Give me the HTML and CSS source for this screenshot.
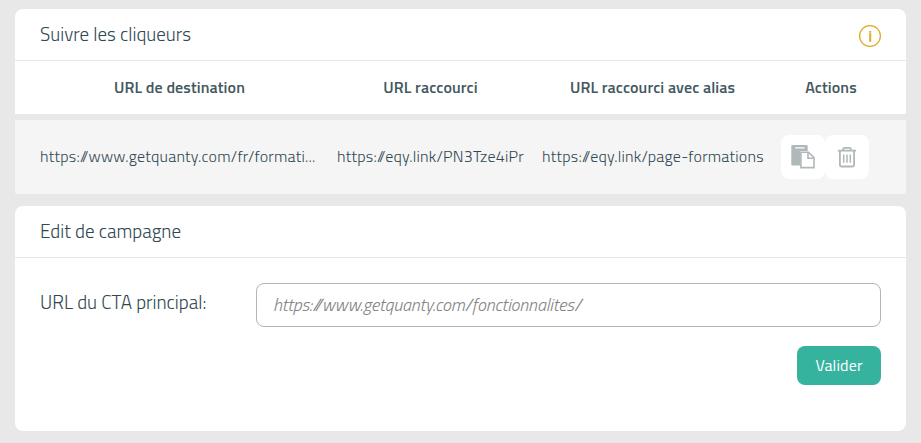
FILE: index.html
```html
<!DOCTYPE html>
<html lang="fr">
<head>
  <meta charset="UTF-8">
  <meta name="viewport" content="width=device-width, initial-scale=1.0">
  <title>Suivre les cliqueurs</title>
  <link rel="stylesheet" href="styles.css">
</head>
<body>
  <div class="card links-card">
    <div class="card-header">
      <h2>Suivre les cliqueurs</h2>
      <svg class="info-icon" viewBox="0 0 24 24">
        <circle cx="12" cy="12" r="10.4" fill="none" stroke="#e0ac25" stroke-width="1.3"/>
        <rect x="11.2" y="7" width="2" height="1.7" fill="#e0ac25"/>
        <rect x="11.2" y="9.2" width="2" height="8.6" fill="#e0ac25"/>
      </svg>
    </div>
    <div class="table-row table-head">
      <div>URL de destination</div>
      <div>URL raccourci</div>
      <div>URL raccourci avec alias</div>
      <div>Actions</div>
    </div>
  </div>

  <div class="table-row table-body">
    <div>https://www.getquanty.com/fr/formati...</div>
    <div>https://eqy.link/PN3Tze4iPr</div>
    <div>https://eqy.link/page-formations</div>
    <div class="actions">
      <button class="icon-btn" type="button" aria-label="Copier">
        <svg width="24" height="24" viewBox="0 0 24 24">
          <path fill="#b0b8ba" fill-rule="evenodd" d="M1.5 0h14a1.2 1.2 0 0 1 1.2 1.2V6H9.200v14.400H1.500a1.200 1.200 0 0 1-1.200-1.200V1.200A1.200 1.200 0 0 1 1.500 0zM4.300 2.200v1.300h9.200V2.200z"/>
          <path fill="#fff" stroke="#b0b8ba" stroke-width="1.600" d="M9.900 7.200h7.600l5.500 5.500v9.900H9.900z"/>
          <path fill="none" stroke="#b0b8ba" stroke-width="1.600" d="M17 7.500v5.700h5.800"/>
        </svg>
      </button>
      <button class="icon-btn" type="button" aria-label="Supprimer">
        <svg width="20" height="22" viewBox="0 0 20 22" fill="none" stroke="#b0b8ba" stroke-width="1.800">
          <path d="M1 4.600h18M6.200 4.500V3a1.200 1.200 0 0 1 1.200-1.200h5.200A1.200 1.200 0 0 1 13.800 3v1.500M2.900 4.600v14.100a1.800 1.800 0 0 0 1.800 1.800h10.600a1.800 1.800 0 0 0 1.800-1.800V4.600"/>
          <path stroke-width="1.500" d="M6.700 8.400v8.400M10 8.400v8.400M13.300 8.400v8.400"/>
        </svg>
      </button>
    </div>
  </div>

  <div class="card edit-card">
    <div class="card-header">
      <h2>Edit de campagne</h2>
    </div>
    <form class="edit-form">
      <div class="form-row">
        <label for="cta-url">URL du CTA principal:</label>
        <input id="cta-url" type="text" placeholder="https://www.getquanty.com/fonctionnalites/">
      </div>
      <button class="submit-btn" type="button">Valider</button>
    </form>
  </div>
</body>
</html>
```

FILE: styles.css
```css
* {
  box-sizing: border-box;
}

body {
  margin: 0;
  padding: 9px 15px 12px;
  font-family: "Titillium Web", Roboto, sans-serif;
  background-color: #e8e8e8;
  color: #2f4852;
}

.card {
  background-color: #fff;
  border-radius: 8px;
}

.links-card {
  height: 105px;
  margin-bottom: 6px;
  border-radius: 8px 8px 0 0;
}

.card-header {
  display: flex;
  justify-content: space-between;
  align-items: center;
  height: 52px;
  padding: 0 25px;
  border-bottom: 1px solid #e8e8e8;
}

.card-header h2 {
  margin: 0;
  padding-bottom: 2px;
  font-size: 19px;
  font-weight: 300;
}

.info-icon {
  width: 24px;
  height: 24px;
  margin: 3px -1px 0 0;
}

/* Links table */
.table-row {
  display: grid;
  grid-template-columns: 279px 187px 221px 100px;
  column-gap: 18px;
  align-items: center;
  padding: 0 25px 2px;
  font-size: 16px;
  white-space: nowrap;
}

.table-head {
  height: 53px;
  color: #435860;
  font-weight: 600;
  letter-spacing: 0.1px;
  text-align: center;
}

.table-body {
  height: 74px;
  margin-bottom: 12px;
  background-color: #f5f5f5;
  border-radius: 0 0 2px 2px;
  font-weight: 300;
  letter-spacing: 0.21px;
}

.actions {
  display: flex;
  padding-top: 2px;
}

.icon-btn {
  display: flex;
  justify-content: center;
  align-items: center;
  width: 44px;
  height: 44px;
  padding: 0;
  border: none;
  border-radius: 8px;
  background-color: #fff;
  cursor: pointer;
}

/* Campaign form */
.edit-card {
  height: 225px;
}

.edit-form {
  display: flex;
  flex-direction: column;
  align-items: flex-end;
  gap: 19px;
  padding: 25px 25px 0;
}

.form-row {
  display: flex;
  width: 100%;
}

.form-row label {
  width: 216px;
  padding-top: 4px;
  font-size: 19px;
  font-weight: 300;
}

.form-row input {
  flex: 1;
  height: 44px;
  padding: 0 16px 2px;
  border: 1px solid #b5b5b5;
  border-radius: 8px;
  font-family: inherit;
  font-size: 18px;
  font-style: italic;
  font-weight: 300;
  letter-spacing: -0.12px;
}

.form-row input::placeholder {
  color: #858585;
}

.submit-btn {
  width: 84px;
  height: 39px;
  padding: 0 0 2px;
  border: none;
  border-radius: 8px;
  background-color: #36b39f;
  color: #fff;
  font-family: inherit;
  font-size: 16px;
  font-weight: 400;
  letter-spacing: 0.15px;
  cursor: pointer;
}
```
